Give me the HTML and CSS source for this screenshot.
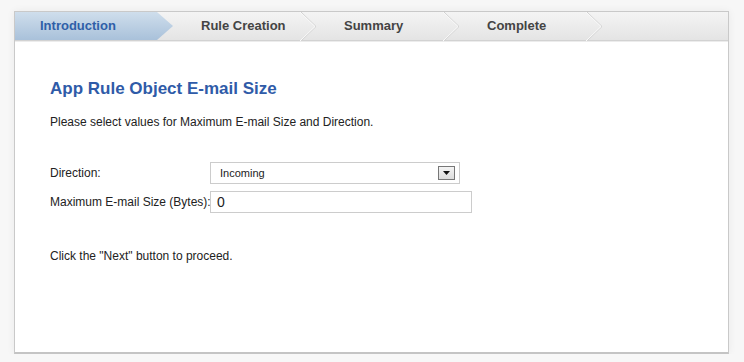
FILE: index.html
```html
<!DOCTYPE html>
<html lang="en">
<head>
    <meta charset="UTF-8">
    <title>App Rule Object E-mail Size</title>
    <link rel="stylesheet" href="styles.css">
</head>
<body>
    <div class="wizard">
        <div class="steps">
            <div class="step first active"><span>Introduction</span></div>
            <div class="step">
                <span>Rule Creation</span>
                <svg class="chevron" width="18" height="29" viewBox="0 0 18 29"><polyline points="1,0 16,14.5 1,29" fill="none" stroke="#cfcfcf" stroke-width="1"/><polyline points="0,0 15,14.5 0,29" fill="none" stroke="#fafafa" stroke-width="1"/></svg>
            </div>
            <div class="step">
                <span>Summary</span>
                <svg class="chevron" width="18" height="29" viewBox="0 0 18 29"><polyline points="1,0 16,14.5 1,29" fill="none" stroke="#cfcfcf" stroke-width="1"/><polyline points="0,0 15,14.5 0,29" fill="none" stroke="#fafafa" stroke-width="1"/></svg>
            </div>
            <div class="step">
                <span>Complete</span>
                <svg class="chevron" width="18" height="29" viewBox="0 0 18 29"><polyline points="1,0 16,14.5 1,29" fill="none" stroke="#cfcfcf" stroke-width="1"/><polyline points="0,0 15,14.5 0,29" fill="none" stroke="#fafafa" stroke-width="1"/></svg>
            </div>
        </div>

        <div class="content">
            <h1>App Rule Object E-mail Size</h1>
            <p class="intro">Please select values for Maximum E-mail Size and Direction.</p>

            <div class="form">
                <div class="row">
                    <label>Direction:</label>
                    <div class="select">
                        <span>Incoming</span>
                        <span class="select-btn">
                            <svg width="7" height="4" viewBox="0 0 7 4"><polygon points="0,0 7,0 3.5,4" fill="#111"/></svg>
                        </span>
                    </div>
                </div>
                <div class="row">
                    <label>Maximum E-mail Size (Bytes):</label>
                    <div class="input">0</div>
                </div>
            </div>

            <p class="hint">Click the "Next" button to proceed.</p>
        </div>
    </div>
</body>
</html>
```

FILE: styles.css
```css
* {
    margin: 0;
    padding: 0;
    box-sizing: border-box;
}

body {
    font-family: 'Liberation Sans', Arial, sans-serif;
    background: #f7f7f7;
    color: #333;
    padding: 11px 15px 0 14px;
}

.wizard {
    width: 715px;
    height: 343px;
    background: #fff;
    border: 1px solid #c9c9c9;
    border-bottom: 2px solid #c4c4c4;
    box-shadow: 0 0 8px rgba(0, 0, 0, 0.06);
}

.steps {
    display: flex;
    height: 29px;
    background: linear-gradient(#f4f4f4, #e4e4e4);
    border-bottom: 1px solid #d2d2d2;
    box-shadow: 0 1px 0 #ececec;
}

.step {
    position: relative;
    width: 143px;
    padding-left: 28px;
    font-size: 13px;
    font-weight: bold;
    color: #444;
    line-height: 28px;
}

.step.first {
    width: 158px;
    padding-left: 25px;
}

.step.active {
    color: #2f5fa8;
    background: linear-gradient(#cfdeec, #a9c1da);
    clip-path: polygon(0 0, 142px 0, 158px 50%, 142px 100%, 0 100%);
}

.chevron {
    position: absolute;
    right: -2px;
    top: 0;
}

.content {
    padding: 38px 35px 0 35px;
}

h1 {
    font-size: 17px;
    line-height: 20px;
    color: #2f5ba8;
}

.intro {
    margin-top: 15px;
    font-size: 12px;
    line-height: 16px;
    color: #222;
}

.form {
    margin-top: 32px;
    display: flex;
    flex-direction: column;
    gap: 7px;
}

.row {
    display: flex;
    align-items: center;
    height: 22px;
}

.row label {
    flex: 0 0 160px;
    min-width: 0;
    white-space: nowrap;
    font-size: 12px;
    color: #222;
}

.select {
    width: 250px;
    height: 22px;
    border: 1px solid #ccc;
    display: flex;
    align-items: center;
    justify-content: space-between;
    padding: 0 4px 0 9px;
    font-size: 11px;
    color: #222;
}

.select-btn {
    width: 17px;
    height: 14px;
    border: 1px solid #777;
    background: linear-gradient(#f4f4f4, #dcdcdc);
    display: flex;
    align-items: center;
    justify-content: center;
}

.input {
    width: 262px;
    height: 22px;
    border: 1px solid #ccc;
    padding-left: 6px;
    font-size: 14px;
    line-height: 20px;
    color: #222;
}

.hint {
    margin-top: 35px;
    font-size: 12px;
    line-height: 16px;
    color: #222;
}
```
